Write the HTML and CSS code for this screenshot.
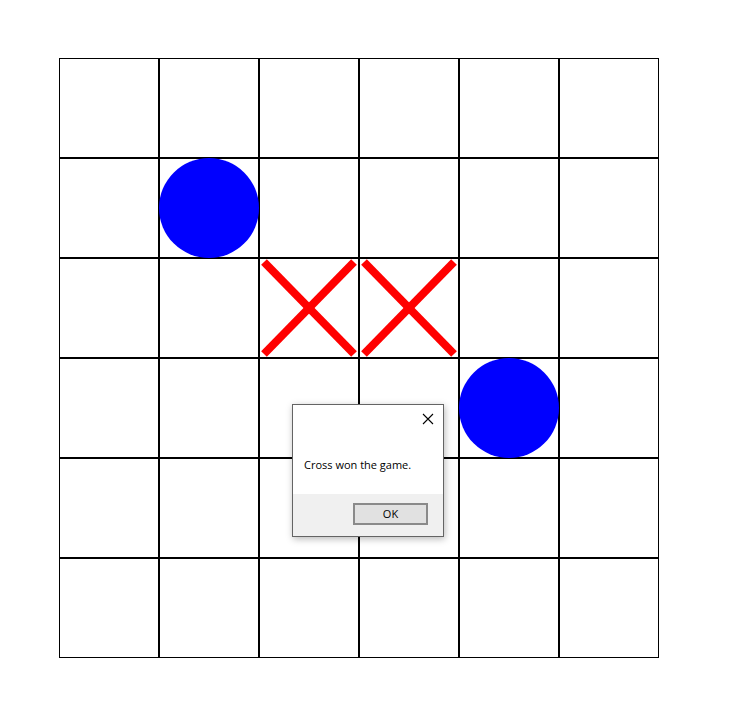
FILE: index.html
```html
<!DOCTYPE html>
<html>
<head>
<meta charset="utf-8">
<link rel="stylesheet" href="styles.css">
</head>
<body>
<div class="board">
  <div class="grid">
    <div class="cell"></div><div class="cell"></div><div class="cell"></div><div class="cell"></div><div class="cell"></div><div class="cell"></div>
    <div class="cell"></div><div class="cell"></div><div class="cell"></div><div class="cell"></div><div class="cell"></div><div class="cell"></div>
    <div class="cell"></div><div class="cell"></div><div class="cell"></div><div class="cell"></div><div class="cell"></div><div class="cell"></div>
    <div class="cell"></div><div class="cell"></div><div class="cell"></div><div class="cell"></div><div class="cell"></div><div class="cell"></div>
    <div class="cell"></div><div class="cell"></div><div class="cell"></div><div class="cell"></div><div class="cell"></div><div class="cell"></div>
    <div class="cell"></div><div class="cell"></div><div class="cell"></div><div class="cell"></div><div class="cell"></div><div class="cell"></div>
  </div>
  <svg class="pieces" width="600" height="600" viewBox="0 0 600 600">
    <circle cx="150" cy="150" r="50" fill="#0000ff"/>
    <circle cx="450" cy="350" r="50" fill="#0000ff"/>
    <g stroke="#ff0000" stroke-width="8">
      <line x1="205" y1="204" x2="295" y2="296"/>
      <line x1="295" y1="204" x2="205" y2="296"/>
      <line x1="305" y1="204" x2="395" y2="296"/>
      <line x1="395" y1="204" x2="305" y2="296"/>
    </g>
  </svg>
  <div class="dialog">
    <div class="dialog-body">
      <div class="titlebar">
        <svg class="close" width="12" height="12" viewBox="0 0 12 12">
          <path d="M1 1 L11 11 M11 1 L1 11" stroke="#000" stroke-width="1.1" fill="none"/>
        </svg>
      </div>
      <div class="message">Cross won the game.</div>
    </div>
    <div class="dialog-footer">
      <button class="ok">OK</button>
    </div>
  </div>
</div>
</body>
</html>
```
FILE: styles.css
```css
html, body {
  margin: 0;
  padding: 0;
  background: #ffffff;
}
body {
  padding: 58px 0 0 59px;
}
.board {
  position: relative;
  width: 600px;
  height: 600px;
}
.grid {
  display: grid;
  grid-template-columns: repeat(6, 100px);
  grid-template-rows: repeat(6, 100px);
}
.cell {
  box-sizing: border-box;
  border: 1px solid #000;
}
.pieces {
  position: absolute;
  left: 0;
  top: 0;
}
.dialog {
  position: absolute;
  left: 233px;
  top: 346px;
  width: 152px;
  height: 133px;
  box-sizing: border-box;
  border: 1px solid #646464;
  background: #ffffff;
  box-shadow: 1px 2px 7px rgba(0, 0, 0, 0.28);
  display: flex;
  flex-direction: column;
  font-family: "Open Sans", "Noto Sans", sans-serif;
  font-size: 11px;
  color: #000;
}
.dialog-body {
  height: 89px;
  display: flex;
  flex-direction: column;
}
.titlebar {
  height: 30px;
  display: flex;
  justify-content: flex-end;
  align-items: flex-start;
  padding: 8px 9px 0 0;
  box-sizing: border-box;
}
.close {
  display: block;
}
.message {
  padding: 23px 0 0 11px;
  line-height: 14px;
}
.dialog-footer {
  flex: 1;
  background: #f0f0f0;
  display: flex;
  justify-content: flex-end;
  align-items: flex-start;
  padding: 9px 15px 0 0;
}
.ok {
  width: 75px;
  height: 22px;
  box-sizing: border-box;
  margin: 0;
  padding: 0;
  border: 2px solid #8a8a8a;
  background: #e1e1e1;
  font-family: "Open Sans", "Noto Sans", sans-serif;
  font-size: 11px;
  color: #000;
  line-height: 16px;
}
```
